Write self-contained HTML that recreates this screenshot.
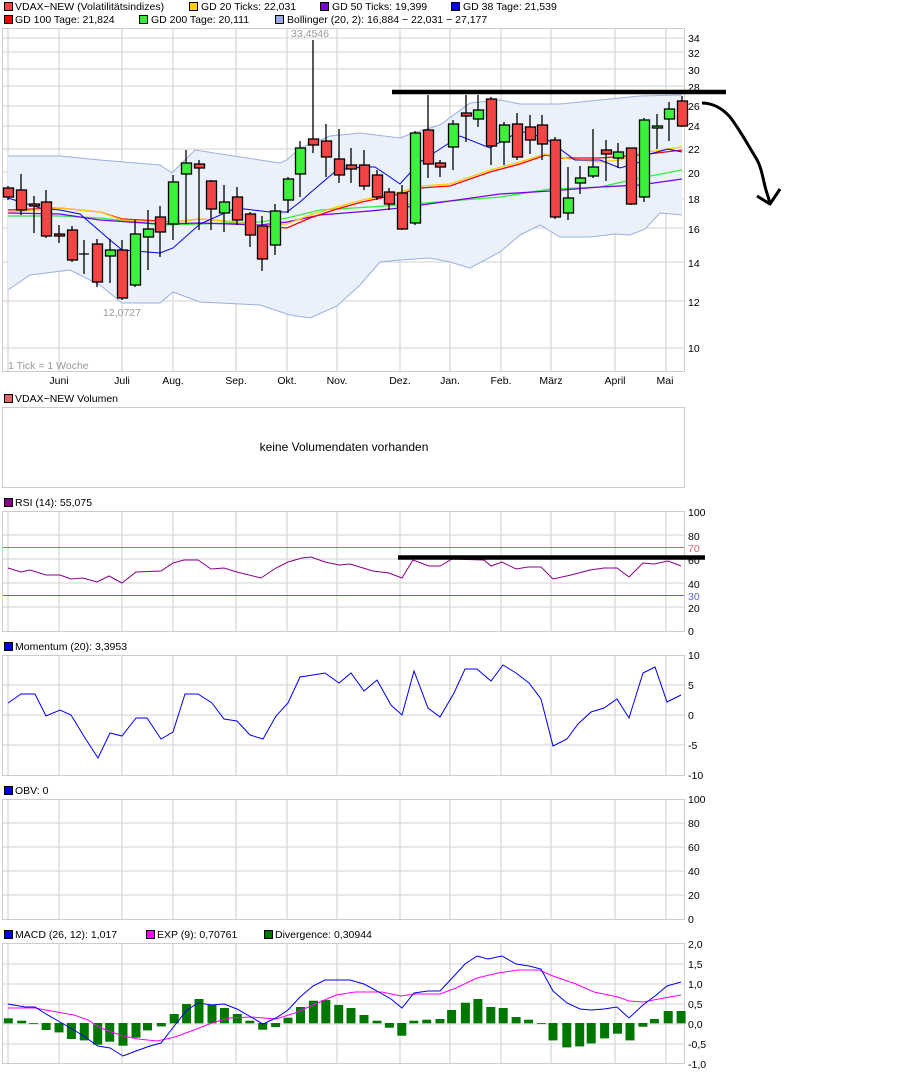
<!DOCTYPE html>
<html><head><meta charset="utf-8"><style>
html,body{margin:0;padding:0;background:#fff;}
svg{display:block;font-family:"Liberation Sans",sans-serif;font-size:10.5px;}
</style></head><body>
<svg width="909" height="1072" viewBox="0 0 909 1072" xmlns="http://www.w3.org/2000/svg">
<g stroke="#000" stroke-width="1">
<rect x="4.5" y="2.5" width="8" height="8" fill="#ef4444"/>
<rect x="189.5" y="2.5" width="8" height="8" fill="#ffcc00"/>
<rect x="320.5" y="2.5" width="8" height="8" fill="#7700ee"/>
<rect x="451.5" y="2.5" width="8" height="8" fill="#0000ee"/>
<rect x="4.5" y="15.5" width="8" height="8" fill="#ff0000"/>
<rect x="139.5" y="15.5" width="8" height="8" fill="#33ee33"/>
<rect x="275.5" y="15.5" width="8" height="8" fill="#99aadd"/>
</g>
<g fill="#000">
<text x="15" y="10">VDAX−NEW (Volatilitätsindizes)</text>
<text x="201" y="10">GD 20 Ticks: 22,031</text>
<text x="332" y="10">GD 50 Ticks: 19,399</text>
<text x="463" y="10">GD 38 Tage: 21,539</text>
<text x="15" y="23">GD 100 Tage: 21,824</text>
<text x="151" y="23">GD 200 Tage: 20,111</text>
<text x="287" y="23">Bollinger (20, 2): 16,884 − 22,031 − 27,177</text>
</g>
<rect x="2.5" y="28.5" width="682" height="343" fill="#fff" stroke="#ccc"/>
<g stroke="#d9d9d9" stroke-width="1.3">
<path d="M8 29V371M59 29V371M122 29V371M173 29V371M236 29V371M287 29V371M337 29V371M400 29V371M450 29V371M501 29V371M551 29V371M615 29V371M666 29V371"/>
<path d="M3 38H684M3 52H684M3 69H684M3 86H684M3 106H684M3 126H684M3 149H684M3 172H684M3 199H684M3 228H684M3 262H684M3 301H684M3 348H684"/>
</g>
<path d="M8 156L60 156L100 160L160 165L172 173L195 150L260 160L280 163L287 160L300 148L330 136L360 133L400 138L410 134L440 125L470 103L500 100L520 104L560 104L600 100L640 96L682 95L682 215L660 213L645 229L630 235L615 234L590 237L560 237L540 225L520 235L500 252L470 268L450 262L430 258L400 260L380 262L360 285L337 306L310 318L290 315L260 305L200 302L173 292L160 303L122 303L100 285L70 270L30 275L8 290Z" fill="#eaf1fb" stroke="none"/>
<g fill="none" stroke="#9ab0dd" stroke-width="1">
<path d="M8 156L60 156L100 160L160 165L172 173L195 150L260 160L280 163L287 160L300 148L330 136L360 133L400 138L410 134L440 125L470 103L500 100L520 104L560 104L600 100L640 96L682 95"/>
<path d="M8 290L30 275L70 270L100 285L122 303L160 303L173 292L200 302L260 305L290 315L310 318L337 306L360 285L380 262L400 260L430 258L450 262L470 268L500 252L520 235L540 225L560 237L590 237L615 234L630 235L645 229L660 213L682 215"/>
</g>
<g fill="none" stroke-width="1.3">
<path stroke="#33ee33" d="M8 216L60 216L100 218L160 225L200 224L260 222L287 218L320 210L370 207L400 205L450 201L500 197L550 189L600 187L640 178L682 170"/>
<path stroke="#7700ee" d="M8 213L60 214L100 220L160 224L200 223L260 225L287 222L320 215L370 211L400 208L450 201L500 194L550 191L600 187L640 185L682 179"/>
<path stroke="#ff0000" d="M8 210L60 208L100 212L122 219L160 221L173 222L200 219L236 222L260 226L287 228L310 218L337 209L362 202L400 194L420 188L450 186L490 172L520 164L546 155L560 158L600 158L640 155L682 150"/>
<path stroke="#ffcc00" d="M8 212L60 208L100 212L122 220L160 222L173 222L200 219L236 222L260 226L287 224L310 215L337 207L362 200L400 192L420 186L450 184L490 170L520 162L545 154L570 159L600 162L620 160L640 153L682 147"/>
<path stroke="#0000ee" stroke-width="1" d="M8 198L40 208L60 210L80 214L110 240L122 250L160 253L173 248L200 224L236 208L270 212L287 212L300 202L310 193L337 170L362 167L375 167L387 175L400 184L420 162L440 149L460 136L490 148L520 131L545 138L575 160L600 160L620 168L640 162L650 154L668 149L682 152"/>
</g>
<g stroke="#000" stroke-width="1.3">
<path fill="none" d="M8 186V200M21 174V215M34 196V233M46 190V238M59 225V243M72 226V262M84 240V274M97 239V287M110 239V283M122 240V300M135 220V287M148 210V270M160 206V257M173 175V240M186 150V224M199 160V230M211 180V230M224 185V232M237 187V225M250 212V247M262 216V271M275 204V255M288 177V213M300 141V197M313 40V153M326 124V177M339 129V183M351 148V183M364 150V190M377 170V200M389 188V210M402 185V230M415 131V225M428 95V178M440 160V177M453 120V170M466 95V142M478 95V127M491 97V165M504 122V165M517 113V160M530 115V154M542 115V160M555 137V219M568 167V220M580 166V194M593 129V178M606 140V181M618 143V168M631 148V205M644 118V202M657 114V149M669 102V141M682 96V127M79 254H89"/>
<g fill="#f34545">
<rect x="3.5" y="188" width="10" height="9"/><rect x="16.5" y="190" width="10" height="20"/><rect x="29.5" y="204" width="10" height="2"/><rect x="41.5" y="202" width="10" height="34"/><rect x="54.5" y="234" width="10" height="2"/><rect x="67.5" y="230" width="10" height="30"/><rect x="92.5" y="244" width="10" height="38"/><rect x="117.5" y="250" width="10" height="48"/><rect x="155.5" y="217" width="10" height="15"/><rect x="194.5" y="164" width="10" height="4"/><rect x="206.5" y="181" width="10" height="28"/><rect x="232.5" y="197" width="10" height="23"/><rect x="245.5" y="214" width="10" height="21"/><rect x="257.5" y="226" width="10" height="33"/><rect x="308.5" y="139" width="10" height="6"/><rect x="321.5" y="141" width="10" height="16"/><rect x="334.5" y="159" width="10" height="16"/><rect x="346.5" y="165" width="10" height="4"/><rect x="359.5" y="165" width="10" height="21"/><rect x="372.5" y="175" width="10" height="22"/><rect x="384.5" y="192" width="10" height="12"/><rect x="397.5" y="193" width="10" height="36"/><rect x="423.5" y="130" width="10" height="34"/><rect x="435.5" y="163" width="10" height="4"/><rect x="461.5" y="113" width="10" height="3"/><rect x="486.5" y="99" width="10" height="47"/><rect x="512.5" y="124" width="10" height="33"/><rect x="525.5" y="127" width="10" height="13"/><rect x="537.5" y="125" width="10" height="19"/><rect x="550.5" y="140" width="10" height="77"/><rect x="601.5" y="150" width="10" height="4"/><rect x="626.5" y="148" width="10" height="56"/><rect x="677.5" y="101" width="10" height="25"/>
</g>
<g fill="#3cf03c">
<rect x="105.5" y="250" width="10" height="6"/><rect x="130.5" y="234" width="10" height="51"/><rect x="143.5" y="229" width="10" height="8"/><rect x="168.5" y="182" width="10" height="42"/><rect x="181.5" y="163" width="10" height="11"/><rect x="219.5" y="202" width="10" height="11"/><rect x="270.5" y="211" width="10" height="34"/><rect x="283.5" y="179" width="10" height="21"/><rect x="295.5" y="148" width="10" height="26"/><rect x="410.5" y="133" width="10" height="90"/><rect x="448.5" y="124" width="10" height="23"/><rect x="473.5" y="110" width="10" height="9"/><rect x="499.5" y="125" width="10" height="17"/><rect x="563.5" y="198" width="10" height="15"/><rect x="575.5" y="178" width="10" height="5"/><rect x="588.5" y="167" width="10" height="9"/><rect x="613.5" y="152" width="10" height="6"/><rect x="639.5" y="120" width="10" height="77"/><rect x="652.5" y="126" width="10" height="2"/><rect x="664.5" y="109" width="10" height="10"/>
</g>
</g>
<g fill="#999">
<text x="310" y="37" text-anchor="middle">33,4546</text>
<text x="122" y="316" text-anchor="middle">12,0727</text>
<text x="8" y="369">1 Tick = 1 Woche</text>
</g>
<path d="M392 92H726" stroke="#000" stroke-width="4.5"/>
<path d="M702 103C712 103 722 108 730 117C740 130 748 145 756 158C762 168 763 180 766 190L770 203M757 196L770 204L780 189" fill="none" stroke="#000" stroke-width="3" stroke-linejoin="round"/>
<g fill="#000">
<text x="688" y="42">34</text><text x="688" y="57">32</text><text x="688" y="74">30</text><text x="688" y="91">28</text><text x="688" y="110">26</text><text x="688" y="130">24</text><text x="688" y="153">22</text><text x="688" y="177">20</text><text x="688" y="203">18</text><text x="688" y="233">16</text><text x="688" y="267">14</text><text x="688" y="306">12</text><text x="688" y="352">10</text>
</g>
<g fill="#000" text-anchor="middle">
<text x="59" y="384">Juni</text><text x="122" y="384">Juli</text><text x="173" y="384">Aug.</text><text x="236" y="384">Sep.</text><text x="287" y="384">Okt.</text><text x="337" y="384">Nov.</text><text x="400" y="384">Dez.</text><text x="450" y="384">Jan.</text><text x="501" y="384">Feb.</text><text x="551" y="384">März</text><text x="615" y="384">April</text><text x="665" y="384">Mai</text>
</g>
<rect x="4.5" y="394.5" width="8" height="8" fill="#dd6666" stroke="#000"/>
<text x="15" y="402">VDAX−NEW Volumen</text>
<rect x="2.5" y="407.5" width="682" height="80" fill="#fff" stroke="#ccc"/>
<text x="344" y="451" text-anchor="middle" font-size="12">keine Volumendaten vorhanden</text>
<rect x="4.5" y="498.5" width="8" height="8" fill="#880088" stroke="#000"/>
<text x="15" y="506">RSI (14): 55,075</text>
<rect x="2.5" y="511.5" width="682" height="120" fill="#fff" stroke="#ccc"/>
<g stroke="#d9d9d9" stroke-width="1.3">
<path d="M8 512V631M59 512V631M122 512V631M173 512V631M236 512V631M287 512V631M337 512V631M400 512V631M450 512V631M501 512V631M551 512V631M615 512V631M666 512V631M3 535H684M3 559H684M3 583H684M3 607H684"/>
</g>
<path d="M3 547.5H684" stroke="#e06060"/>
<path d="M3 595.5H684" stroke="#6060e0"/>
<path fill="none" stroke="#880088" d="M8 568L21 572L30 570L46 575L60 575L71 579L83 578L97 582L109 576L122 583L136 572L161 571L173 563L184 560L198 560L211 569L224 568L237 572L261 578L276 568L288 562L302 558L311 557L325 562L339 565L350 564L373 571L389 573L402 578L413 560L429 566L440 566L452 559L484 560L491 566L502 562L516 569L528 567L541 567L553 579L571 575L590 570L604 568L617 568L629 577L643 563L654 564L668 561L681 566"/>
<path d="M398 557.5H705" stroke="#000" stroke-width="4.5"/>
<g fill="#000">
<text x="688" y="516">100</text><text x="688" y="540">80</text><text x="688" y="552" fill="#e06060">70</text><text x="688" y="564">60</text><text x="688" y="588">40</text><text x="688" y="600" fill="#6060e0">30</text><text x="688" y="612">20</text><text x="688" y="635">0</text>
</g>
<rect x="4.5" y="642.5" width="8" height="8" fill="#0000ee" stroke="#000"/>
<text x="15" y="650">Momentum (20): 3,3953</text>
<rect x="2.5" y="655.5" width="682" height="120" fill="#fff" stroke="#ccc"/>
<g stroke="#d9d9d9" stroke-width="1.3">
<path d="M8 656V775M59 656V775M122 656V775M173 656V775M236 656V775M287 656V775M337 656V775M400 656V775M450 656V775M501 656V775M551 656V775M615 656V775M666 656V775M3 685H684M3 715H684M3 745H684"/>
</g>
<path fill="none" stroke="#0000ee" d="M8 703L21 694L35 694L46 716L60 710L71 715L85 738L98 758L110 733L122 736L136 718L147 718L161 739L173 732L185 694L198 694L212 703L224 719L237 721L250 735L263 739L276 716L288 703L300 677L313 675L325 673L339 683L351 673L364 691L377 680L391 705L402 715L414 671L428 708L440 717L454 693L465 669L477 669L491 681L503 665L516 673L529 683L541 699L553 746L567 739L578 724L591 712L604 708L617 699L629 718L643 673L655 667L667 702L681 695"/>
<g fill="#000">
<text x="688" y="659">10</text><text x="688" y="689">5</text><text x="688" y="719">0</text><text x="688" y="749">-5</text><text x="688" y="779">-10</text>
</g>
<rect x="4.5" y="786.5" width="8" height="8" fill="#0000ee" stroke="#000"/>
<text x="15" y="794">OBV: 0</text>
<rect x="2.5" y="799.5" width="682" height="120" fill="#fff" stroke="#ccc"/>
<g stroke="#d9d9d9" stroke-width="1.3">
<path d="M8 800V919M59 800V919M122 800V919M173 800V919M236 800V919M287 800V919M337 800V919M400 800V919M450 800V919M501 800V919M551 800V919M615 800V919M666 800V919M3 823H684M3 847H684M3 871H684M3 895H684"/>
</g>
<g fill="#000">
<text x="688" y="803">100</text><text x="688" y="827">80</text><text x="688" y="851">60</text><text x="688" y="875">40</text><text x="688" y="899">20</text><text x="688" y="923">0</text>
</g>
<g stroke="#000">
<rect x="4.5" y="930.5" width="8" height="8" fill="#0000ee"/>
<rect x="146.5" y="930.5" width="8" height="8" fill="#ff00ff"/>
<rect x="264.5" y="930.5" width="8" height="8" fill="#007700"/>
</g>
<text x="15" y="938">MACD (26, 12): 1,017</text>
<text x="157" y="938">EXP (9): 0,70761</text>
<text x="275" y="938">Divergence: 0,30944</text>
<rect x="2.5" y="943.5" width="682" height="120" fill="#fff" stroke="#ccc"/>
<g stroke="#d9d9d9" stroke-width="1.3">
<path d="M8 944V1063M59 944V1063M122 944V1063M173 944V1063M236 944V1063M287 944V1063M337 944V1063M400 944V1063M450 944V1063M501 944V1063M551 944V1063M615 944V1063M666 944V1063M3 964H684M3 984H684M3 1004H684M3 1024H684M3 1044H684"/>
</g>
<g fill="#007700">
<rect x="3.8" y="1018.3" width="9" height="5"/><rect x="17.2" y="1020.7" width="9" height="2.6"/><rect x="29.1" y="1023" width="9" height="0.8"/><rect x="41.6" y="1023" width="9" height="7"/><rect x="54.5" y="1023" width="9" height="9.4"/><rect x="66.9" y="1023" width="9" height="16"/><rect x="79.8" y="1023" width="9" height="17.4"/><rect x="93.2" y="1023" width="9" height="21.7"/><rect x="105.2" y="1023" width="9" height="18.7"/><rect x="118.5" y="1023" width="9" height="22.7"/><rect x="131.5" y="1023" width="9" height="14.7"/><rect x="143" y="1023" width="9" height="7.4"/><rect x="156.8" y="1023" width="9" height="3.4"/><rect x="169.7" y="1014" width="9" height="9.3"/><rect x="182.1" y="1004" width="9" height="19.3"/><rect x="194.5" y="999" width="9" height="24.3"/><rect x="207.5" y="1005" width="9" height="18.3"/><rect x="219.9" y="1008" width="9" height="15.3"/><rect x="232.8" y="1014" width="9" height="9.3"/><rect x="245.3" y="1020.7" width="9" height="2.6"/><rect x="258.2" y="1023" width="9" height="6.7"/><rect x="271.1" y="1023" width="9" height="4"/><rect x="283.5" y="1017.7" width="9" height="5.6"/><rect x="296" y="1007" width="9" height="16.3"/><rect x="308.9" y="1000.7" width="9" height="22.6"/><rect x="321.3" y="1000" width="9" height="23.3"/><rect x="334.2" y="1005" width="9" height="18.3"/><rect x="346.5" y="1008" width="9" height="15.3"/><rect x="359.5" y="1015" width="9" height="8.3"/><rect x="372.5" y="1020.7" width="9" height="2.6"/><rect x="384.9" y="1023" width="9" height="4.7"/><rect x="397.3" y="1023" width="9" height="12.7"/><rect x="409.3" y="1020.7" width="9" height="2.6"/><rect x="422.2" y="1019.7" width="9" height="3.6"/><rect x="435.5" y="1019" width="9" height="4.3"/><rect x="447.1" y="1010" width="9" height="13.3"/><rect x="460.9" y="1002.7" width="9" height="20.6"/><rect x="473.4" y="999" width="9" height="24.3"/><rect x="486.3" y="1007" width="9" height="16.3"/><rect x="498.7" y="1008" width="9" height="15.3"/><rect x="511.6" y="1017" width="9" height="6.3"/><rect x="524.1" y="1019.7" width="9" height="3.6"/><rect x="537" y="1023" width="9" height="0.8"/><rect x="548.5" y="1023" width="9" height="17.4"/><rect x="562.3" y="1023" width="9" height="24.4"/><rect x="575.2" y="1023" width="9" height="23.4"/><rect x="586.7" y="1023" width="9" height="20.4"/><rect x="600.1" y="1023" width="9" height="15.4"/><rect x="613" y="1023" width="9" height="10.7"/><rect x="625.5" y="1023" width="9" height="17.4"/><rect x="638.4" y="1023" width="9" height="3.7"/><rect x="649.9" y="1019" width="9" height="4.3"/><rect x="663.7" y="1011" width="9" height="12.3"/><rect x="676.6" y="1011" width="9" height="12.3"/>
</g>
<path fill="none" stroke="#ff00ff" d="M8 1008L35 1008L51 1011L74 1015L88 1020L99 1027L111 1032L123 1036L138 1039L157 1041L175 1037L194 1030L212 1023L230 1018L251 1017L276 1019L295 1013L313 1005L336 995L355 992L382 992L401 996L415 994L440 994L456 988L477 978L498 973L518 970L539 970L553 976L576 984L594 992L618 997L629 1001L643 1002L664 998L681 995"/>
<path fill="none" stroke="#0000ee" d="M8 1004L25 1007L35 1007L46 1014L60 1022L74 1030L85 1037L98 1046L110 1048L123 1056L136 1051L150 1046L161 1043L175 1025L187 1010L198 1003L212 1005L224 1004L237 1009L251 1017L263 1024L276 1018L288 1010L300 997L313 986L325 980L350 980L364 984L377 991L391 999L402 1008L414 993L428 991L440 991L454 976L465 964L477 956L488 959L502 956L516 964L529 966L541 969L553 991L567 1003L580 1009L591 1010L604 1009L617 1007L629 1018L643 1005L655 996L667 986L681 982"/>
<g fill="#000">
<text x="688" y="948">2,0</text><text x="688" y="968">1,5</text><text x="688" y="988">1,0</text><text x="688" y="1008">0,5</text><text x="688" y="1028">0,0</text><text x="688" y="1048">-0,5</text><text x="688" y="1068">-1,0</text>
</g>
</svg>
</body></html>
